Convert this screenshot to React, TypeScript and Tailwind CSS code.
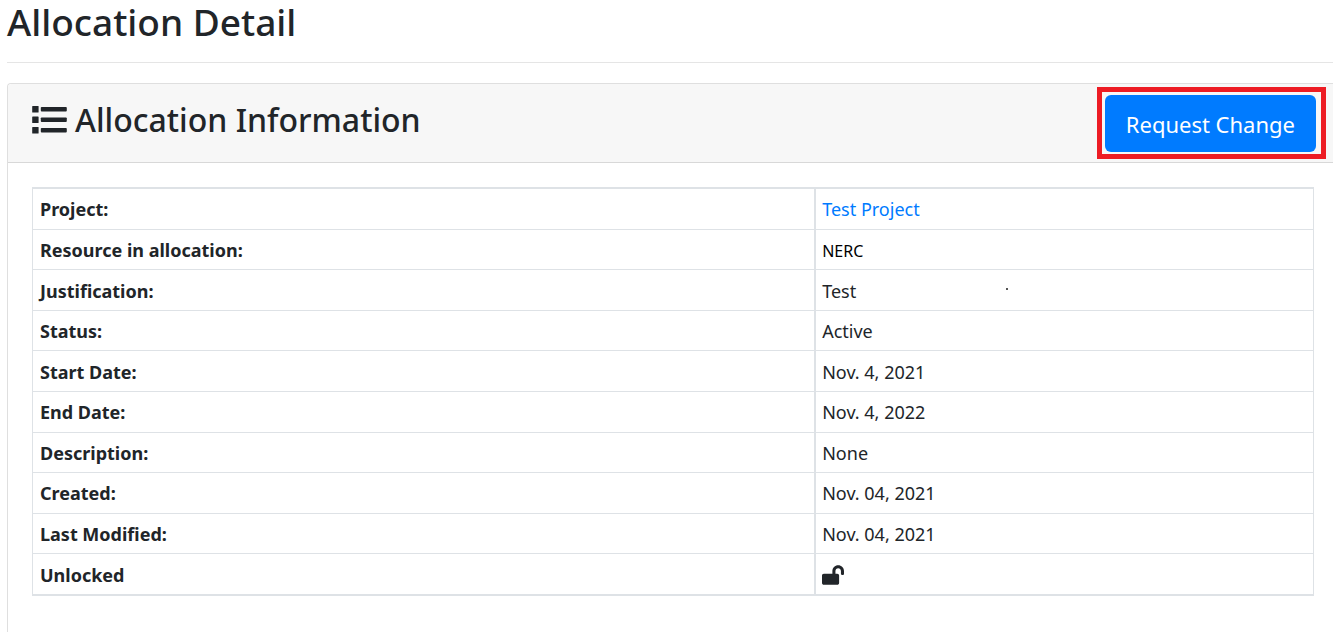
import type { ReactNode } from "react";
import { FaLockOpen } from "react-icons/fa";

type Row = { label: string; value: ReactNode };

const rows: Row[] = [
  {
    label: "Project:",
    value: (
      <a href="#project" className="text-[#007bff] hover:underline">
        Test Project
      </a>
    ),
  },
  {
    label: "Resource in allocation:",
    value: <span className="text-base text-black">NERC</span>,
  },
  {
    label: "Justification:",
    value: (
      <span className="flex gap-[150px]">
        <span>Test</span>
        <span className="mt-2.5 size-0.5 bg-[#555555]" />
      </span>
    ),
  },
  { label: "Status:", value: "Active" },
  { label: "Start Date:", value: "Nov. 4, 2021" },
  { label: "End Date:", value: "Nov. 4, 2022" },
  { label: "Description:", value: "None" },
  { label: "Created:", value: "Nov. 04, 2021" },
  { label: "Last Modified:", value: "Nov. 04, 2021" },
  { label: "Unlocked", value: <FaLockOpen aria-label="Unlocked" className="h-5 w-[22px]" /> },
];

function ListIcon() {
  return (
    <svg aria-hidden="true" viewBox="0 0 35 28" className="h-7 w-[35px]" fill="currentColor">
      <rect x="0.2" y="0" width="6.4" height="6.5" rx="0.6" />
      <rect x="0.2" y="10.5" width="6.4" height="6.5" rx="0.6" />
      <rect x="0.2" y="21" width="6.4" height="6.5" rx="0.6" />
      <rect x="8.8" y="0.9" width="26" height="4.6" rx="0.9" />
      <rect x="8.8" y="11.4" width="26" height="4.6" rx="0.9" />
      <rect x="8.8" y="21.9" width="26" height="4.6" rx="0.9" />
    </svg>
  );
}

export default function App() {
  return (
    <main className="flex min-h-screen flex-col bg-white pl-[7px] font-['Noto_Sans',sans-serif] text-[#212529]">
      <h1 className="text-[37px] leading-[44px] font-medium">Allocation Detail</h1>
      <hr className="mt-[18px] border-t border-[#e5e5e5]" />
      <section className="mt-5 grow rounded-tl border-t border-l border-[#dfdfdf]">
        <header className="flex items-start justify-between rounded-tl border-b border-[#d8d8d8] bg-[#f7f7f7] pt-[3px] pr-[7px] pb-[3px] pl-6">
          <h2 className="flex items-center gap-2 pt-3 text-[32px] leading-[42px] font-medium">
            <ListIcon />
            Allocation Information
          </h2>
          <div className="border-[5px] border-[#ed1c24] px-[3px] pt-[3px] pb-0.5">
            <button
              type="button"
              className="mr-0.5 rounded-md bg-[#007bff] px-[21px] pt-0.5 text-[22px] leading-[55px] text-white"
            >
              Request Change
            </button>
          </div>
        </header>
        <div className="pt-6 pr-[19px] pb-6 pl-6">
          <table className="h-[409px] w-full border-collapse border border-y-2 border-[#dee2e6] text-lg leading-[27px]">
            <tbody>
              {rows.map((row) => (
                <tr key={row.label} className="border-b border-[#dee2e6]">
                  <th
                    scope="row"
                    className="w-[61.1%] border-r-2 border-[#dee2e6] px-[7px] pt-0.5 text-left font-bold"
                  >
                    {row.label}
                  </th>
                  <td className="px-1.5 pt-0.5">{row.value}</td>
                </tr>
              ))}
            </tbody>
          </table>
        </div>
      </section>
    </main>
  );
}
